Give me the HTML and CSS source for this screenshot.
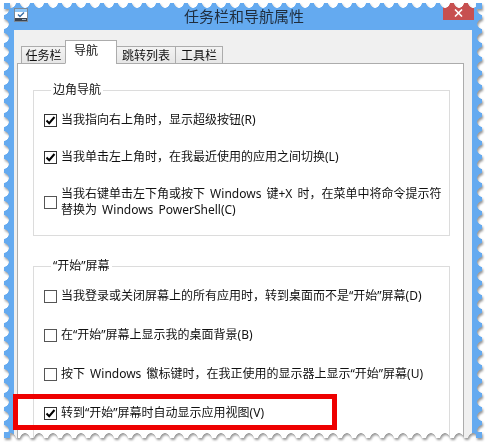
FILE: index.html
```html
<!DOCTYPE html>
<html lang="zh-CN">
<head>
  <meta charset="UTF-8">
  <title>任务栏和导航属性</title>
  <link rel="stylesheet" href="styles.css">
</head>
<body>
<div class="page">
  <div class="frame">
    <div class="win">
      <div class="titlebar">
        <svg class="app-icon" width="14" height="14" viewBox="0 0 14 14">
          <rect x="0.5" y="0.5" width="13" height="13" fill="#fff" stroke="#7a8a9a"/>
          <rect x="1" y="1" width="12" height="3" fill="#8cc4f5"/>
          <path d="M4 6.5 L6 8.5 L10 4.5" stroke="#3a6ea5" stroke-width="1.4" fill="none"/>
          <rect x="1" y="10" width="12" height="3" fill="#3b4450"/>
          <rect x="8" y="11" width="4" height="1" fill="#9fb3c8"/>
        </svg>
        <div class="title">任务栏和导航属性</div>
        <div class="close">
          <svg width="9" height="8" viewBox="0 0 9 8">
            <path d="M1 0.5 L8 7.5 M8 0.5 L1 7.5" stroke="#fff" stroke-width="1.6"/>
          </svg>
        </div>
      </div>
      <div class="client">
        <div class="tabs">
          <div class="tab t1">任务栏</div>
          <div class="tab t2 active">导航</div>
          <div class="tab t3">跳转列表</div>
          <div class="tab t4">工具栏</div>
        </div>
        <div class="panel">
          <fieldset class="group">
            <legend>边角导航</legend>
            <div class="rows rows-a">
              <label class="row"><span class="cb on"><svg width="11" height="11" viewBox="0 0 11 11"><path d="M1.5 5.5 L4.2 8.2 L9.5 2" stroke="#000" stroke-width="2" fill="none"/></svg></span><span>当我指向右上角时，显示超级按钮(R)</span></label>
              <label class="row"><span class="cb on"><svg width="11" height="11" viewBox="0 0 11 11"><path d="M1.5 5.5 L4.2 8.2 L9.5 2" stroke="#000" stroke-width="2" fill="none"/></svg></span><span>当我单击左上角时，在我最近使用的应用之间切换(L)</span></label>
              <label class="row"><span class="cb"></span><span>当我右键单击左下角或按下 Windows 键+X 时，在菜单中将命令提示符<br>替换为 Windows PowerShell(C)</span></label>
            </div>
          </fieldset>
          <fieldset class="group">
            <legend>“开始”屏幕</legend>
            <div class="rows rows-b">
              <label class="row"><span class="cb"></span><span>当我登录或关闭屏幕上的所有应用时，转到桌面而不是“开始”屏幕(D)</span></label>
              <label class="row"><span class="cb"></span><span>在“开始”屏幕上显示我的桌面背景(B)</span></label>
              <label class="row"><span class="cb"></span><span>按下 Windows 徽标键时，在我正使用的显示器上显示“开始”屏幕(U)</span></label>
              <label class="row"><span class="cb on"><svg width="11" height="11" viewBox="0 0 11 11"><path d="M1.5 5.5 L4.2 8.2 L9.5 2" stroke="#000" stroke-width="2" fill="none"/></svg></span><span>转到“开始”屏幕时自动显示应用视图(V)</span></label>
            </div>
          </fieldset>
        </div>
      </div>
    </div>
  </div>
  <div class="mark"></div>
</div>
</body>
</html>
```

FILE: styles.css
```css
*{
    margin: 0;
    padding: 0;
    box-sizing: border-box;
}
body{
    background: #fff;
    overflow: hidden;
    font-family: "Noto Sans", "Noto Sans CJK SC", sans-serif;
    font-size: 12px;
    color: #111;
}
.page{
    position: relative;
    width: 488px;
    height: 447px;
    padding: 3px 0 0 4px;
}
.frame{
    filter: drop-shadow(1px 2px 1px rgba(0,0,0,0.4));
}
.win{
    width: 478px;
    height: 435px;
    background: #64aaf0;
    display: flex;
    flex-direction: column;
    overflow: hidden;
    -webkit-mask:
        linear-gradient(#000 0 0) center / calc(100% - 10px) calc(100% - 10px) no-repeat,
        radial-gradient(circle at 50% 0, transparent 4.5px, #000 5px) top left / 14px 6px repeat-x,
        radial-gradient(circle at 50% 100%, transparent 4.5px, #000 5px) bottom left / 14px 6px repeat-x,
        radial-gradient(circle at 0 50%, transparent 4.5px, #000 5px) top left / 6px 14px repeat-y,
        radial-gradient(circle at 100% 50%, transparent 4.5px, #000 5px) top right / 6px 14px repeat-y;
    mask:
        linear-gradient(#000 0 0) center / calc(100% - 10px) calc(100% - 10px) no-repeat,
        radial-gradient(circle at 50% 0, transparent 4.5px, #000 5px) top left / 14px 6px repeat-x,
        radial-gradient(circle at 50% 100%, transparent 4.5px, #000 5px) bottom left / 14px 6px repeat-x,
        radial-gradient(circle at 0 50%, transparent 4.5px, #000 5px) top left / 6px 14px repeat-y,
        radial-gradient(circle at 100% 50%, transparent 4.5px, #000 5px) top right / 6px 14px repeat-y;
}
.titlebar{
    height: 27px;
    flex: none;
    display: grid;
    grid-template-columns: 1fr auto 1fr;
    align-items: start;
    padding: 0 8px 0 10px;
}
.app-icon{
    margin-top: 5px;
}
.title{
    margin-top: 4px;
    font-size: 15px;
    line-height: 18px;
    color: #1f2d3d;
    font-family: "Noto Sans CJK SC", sans-serif;
}
.close{
    justify-self: end;
    width: 31px;
    height: 17px;
    background: #c75050;
    display: flex;
    align-items: center;
    justify-content: center;
    padding-top: 3px;
}
.client{
    flex: 1;
    margin: 0 10px;
    background: #f0f0f0;
    padding: 10px 0 0 3px;
    display: flex;
    flex-direction: column;
}
.tabs{
    display: flex;
    align-items: flex-end;
    margin: 0 0 -1px 4px;
    position: relative;
    z-index: 1;
}
.tab{
    height: 18px;
    line-height: 14px;
    padding-top: 1px;
    text-align: center;
    border: 1px solid #acacac;
    background: linear-gradient(#f3f3f3, #e6e6e6);
    margin-left: -1px;
    font-family: "Noto Sans CJK SC", sans-serif;
}
.t1{ width: 45px; margin-left: 0; }
.t2{ width: 52px; }
.t3{ width: 60px; }
.t4{ width: 48px; }
.tab.active{
    height: 24px;
    padding: 2px 10px 0 0;
    background: #fff;
    border-bottom-color: #fff;
}
.panel{
    flex: 1;
    width: 447px;
    background: #fff;
    border: 1px solid #acacac;
    padding: 18px 0 0 15px;
}
.group{
    width: 417px;
    border: 1px solid #dcdcdc;
    padding: 14px 0 17px 10px;
}
.group + .group{
    margin-top: 22px;
}
.group legend{
    margin-left: 7px;
    padding: 0 2px;
    line-height: 16px;
    color: #111;
}
.rows{
    display: flex;
    flex-direction: column;
}
.rows-a{
    gap: 21px;
}
.rows-b{
    gap: 23px;
}
.row{
    display: flex;
    align-items: center;
    line-height: 16px;
    white-space: nowrap;
    word-spacing: 2px;
}
.cb{
    width: 13px;
    height: 13px;
    flex: none;
    border: 1px solid #555;
    background: #fff;
    margin-right: 4px;
    display: flex;
    align-items: center;
    justify-content: center;
}
.cb.on{
    border-color: #333;
}
.mark{
    position: absolute;
    left: 13px;
    top: 394px;
    width: 324px;
    height: 36px;
    border: 5px solid #ee0000;
}
```
